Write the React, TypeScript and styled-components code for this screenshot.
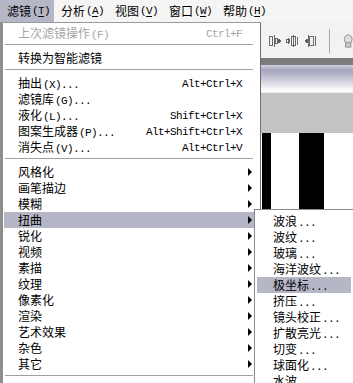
import styled, { createGlobalStyle } from 'styled-components'

const GlobalStyle = createGlobalStyle`
  html, body { margin: 0; padding: 0; }
  body {
    background: #f0f0f0;
    font-family: "Noto Sans CJK SC", "Noto Sans", sans-serif;
    font-size: 12px;
    color: #000;
  }
`

type Entry =
  | { kind: 'sep' }
  | {
      kind: 'item'
      label: string
      latin?: string
      shortcut?: string
      sub?: boolean
      disabled?: boolean
      active?: boolean
    }

const menuTitles = [
  { label: '滤镜', key: 'T', active: true },
  { label: '分析', key: 'A' },
  { label: '视图', key: 'V' },
  { label: '窗口', key: 'W' },
  { label: '帮助', key: 'H' },
]

const filterMenu: Entry[] = [
  { kind: 'item', label: '上次滤镜操作', latin: '(F)', shortcut: 'Ctrl+F', disabled: true },
  { kind: 'sep' },
  { kind: 'item', label: '转换为智能滤镜' },
  { kind: 'sep' },
  { kind: 'item', label: '抽出', latin: '(X)...', shortcut: 'Alt+Ctrl+X' },
  { kind: 'item', label: '滤镜库', latin: '(G)...' },
  { kind: 'item', label: '液化', latin: '(L)...', shortcut: 'Shift+Ctrl+X' },
  { kind: 'item', label: '图案生成器', latin: '(P)...', shortcut: 'Alt+Shift+Ctrl+X' },
  { kind: 'item', label: '消失点', latin: '(V)...', shortcut: 'Alt+Ctrl+V' },
  { kind: 'sep' },
  { kind: 'item', label: '风格化', sub: true },
  { kind: 'item', label: '画笔描边', sub: true },
  { kind: 'item', label: '模糊', sub: true },
  { kind: 'item', label: '扭曲', sub: true, active: true },
  { kind: 'item', label: '锐化', sub: true },
  { kind: 'item', label: '视频', sub: true },
  { kind: 'item', label: '素描', sub: true },
  { kind: 'item', label: '纹理', sub: true },
  { kind: 'item', label: '像素化', sub: true },
  { kind: 'item', label: '渲染', sub: true },
  { kind: 'item', label: '艺术效果', sub: true },
  { kind: 'item', label: '杂色', sub: true },
  { kind: 'item', label: '其它', sub: true },
  { kind: 'sep' },
]

const distortMenu = [
  { label: '波浪' },
  { label: '波纹' },
  { label: '玻璃' },
  { label: '海洋波纹' },
  { label: '极坐标', active: true },
  { label: '挤压' },
  { label: '镜头校正' },
  { label: '扩散亮光' },
  { label: '切变' },
  { label: '球面化' },
  { label: '水波' },
]

// black / white bands of the document behind the menus
const stripes = [
  { w: 262, c: '#ffffff' },
  { w: 9, c: '#000000' },
  { w: 28, c: '#ffffff' },
  { w: 25, c: '#000000' },
  { w: 29, c: '#ffffff' },
]

export default function App() {
  return (
    <>
      <GlobalStyle />
      <Page>
        <MenuBar>
          {menuTitles.map((m) => (
            <MenuTitle key={m.label} $active={!!m.active}>
              {m.label}
              <Latin>
                (<u>{m.key}</u>)
              </Latin>
            </MenuTitle>
          ))}
        </MenuBar>

        <Workspace>
          <OptionsBar>
            <AlignIcon variant={0} />
            <AlignIcon variant={1} />
            <AlignIcon variant={2} />
            <ToolSep />
            <PartialIcon />
          </OptionsBar>
          <DarkBand />
          <TitleBar />
          <GrayBand />
          <Canvas>
            {stripes.map((s, i) => (
              <Stripe key={i} style={{ width: s.w, background: s.c }} />
            ))}
          </Canvas>
        </Workspace>

        <DropMenu>
          {filterMenu.map((e, i) =>
            e.kind === 'sep' ? (
              <Separator key={i} />
            ) : (
              <Item key={i} $active={!!e.active} $disabled={!!e.disabled}>
                <Label>
                  {e.label}
                  {e.latin && <Latin>{e.latin}</Latin>}
                </Label>
                <Shortcut>{e.shortcut}</Shortcut>
                <ArrowCell>{e.sub && <Arrow />}</ArrowCell>
              </Item>
            )
          )}
        </DropMenu>

        <SubMenu>
          {distortMenu.map((s) => (
            <SubItem key={s.label} $active={!!s.active}>
              {s.label}
              <Latin>...</Latin>
            </SubItem>
          ))}
        </SubMenu>
      </Page>
    </>
  )
}

const AlignIcon = ({ variant }: { variant: number }) => (
  <svg width="16" height="14" viewBox="0 0 16 14" shapeRendering="crispEdges">
    {variant === 0 && (
      <g fill="none" stroke="#555">
        <rect x="1.5" y="1.5" width="4" height="11" />
        <line x1="7.5" y1="0" x2="7.5" y2="14" />
        <rect x="8.5" y="4.5" width="3" height="5" />
        <path d="M12 5 L15 7 L12 9 Z" fill="#555" />
      </g>
    )}
    {variant === 1 && (
      <g fill="none" stroke="#555">
        <line x1="2.5" y1="3" x2="2.5" y2="11" />
        <rect x="0.5" y="5.5" width="4" height="3" />
        <rect x="6.5" y="1.5" width="5" height="11" />
        <line x1="9" y1="0" x2="9" y2="14" />
        <line x1="13.5" y1="2" x2="13.5" y2="12" />
      </g>
    )}
    {variant === 2 && (
      <g fill="none" stroke="#555">
        <path d="M4 5 L1 7 L4 9 Z" fill="#555" />
        <line x1="5.5" y1="0" x2="5.5" y2="14" />
        <rect x="6.5" y="1.5" width="4" height="11" />
        <line x1="13.5" y1="1" x2="13.5" y2="13" />
      </g>
    )}
  </svg>
)

const PartialIcon = () => (
  <svg width="12" height="16" viewBox="0 0 12 16">
    <ellipse cx="6" cy="6" rx="4.5" ry="5" fill="#ddd" stroke="#888" />
    <rect x="3" y="10" width="6" height="5" fill="#ccc" stroke="#888" />
  </svg>
)

const Page = styled.div`
  position: relative;
  width: 353px;
  height: 383px;
  overflow: hidden;
  display: flex;
  flex-direction: column;
  background: #f0f0f0;
`

const MenuBar = styled.div`
  display: flex;
  height: 22px;
  background: #f5f5f5;
  flex-shrink: 0;
`

const MenuTitle = styled.div<{ $active: boolean }>`
  display: flex;
  align-items: center;
  padding: 0 7px;
  width: 40px;
  white-space: nowrap;
  background: ${(p) => (p.$active ? '#b5b6c6' : 'transparent')};
  line-height: 22px;
`

const Latin = styled.span`
  font-family: "Liberation Mono", monospace;
  font-size: 11px;
  letter-spacing: -0.6px;
  margin-left: 1px;

  u {
    text-decoration: underline;
    text-underline-offset: 2px;
  }
`

const Workspace = styled.div`
  flex: 1;
  display: flex;
  flex-direction: column;
  min-height: 0;
`

const OptionsBar = styled.div`
  height: 36px;
  display: flex;
  align-items: center;
  gap: 4px;
  padding: 2px 0 0 268px;
  background: #f2f2f2;
  box-sizing: border-box;
  flex-shrink: 0;
`

const ToolSep = styled.div`
  width: 1px;
  height: 24px;
  margin: 0 9px 0 7px;
  background: #a8a8a8;
`

const DarkBand = styled.div`
  height: 7px;
  background: #7c7c7c;
  flex-shrink: 0;
`

const TitleBar = styled.div`
  height: 28px;
  background: linear-gradient(
    to bottom,
    #d2d2e0 0%,
    #a6a6be 18%,
    #bcbccd 40%,
    #e2e2ea 70%,
    #ffffff 92%,
    #e6e6e6 100%
  );
  flex-shrink: 0;
`

const GrayBand = styled.div`
  height: 40px;
  background: #c3c3c3;
  flex-shrink: 0;
`

const Canvas = styled.div`
  flex: 1;
  display: flex;
`

const Stripe = styled.div`
  height: 100%;
  flex-shrink: 0;
`

const DropMenu = styled.div`
  position: absolute;
  left: 0;
  top: 22px;
  width: 252px;
  height: 380px;
  padding: 2px 4px 0 1px;
  background: #fff;
  border-left: 3px solid #8e8e8e;
  border-right: 1px solid #6e6e6e;
  border-top: 1px solid #9a9a9a;
`

const Item = styled.div<{ $active: boolean; $disabled: boolean }>`
  display: grid;
  grid-template-columns: 1fr auto 14px;
  align-items: center;
  height: 16px;
  padding-left: 14px;
  white-space: nowrap;
  background: ${(p) => (p.$active ? '#b5b6c6' : 'transparent')};
  color: ${(p) => (p.$disabled ? '#a6a6a6' : '#000')};
`

const Label = styled.span`
  line-height: 16px;
`

const Shortcut = styled.span`
  font-family: "Liberation Mono", monospace;
  font-size: 11px;
  letter-spacing: -0.6px;
  line-height: 16px;
`

const ArrowCell = styled.span`
  display: flex;
  justify-content: center;
`

const Arrow = styled.span`
  width: 0;
  height: 0;
  border-left: 4px solid #000;
  border-top: 4px solid transparent;
  border-bottom: 4px solid transparent;
  margin-left: 1px;
`

const Separator = styled.div`
  height: 9px;
  display: flex;
  align-items: flex-start;
  padding: 0 3px 0 1px;

  &::before {
    content: '';
    flex: 1;
    margin-top: 3px;
    height: 1px;
    background: #a0a0a0;
  }
`

const SubMenu = styled.div`
  position: absolute;
  left: 254px;
  top: 209px;
  width: 94px;
  padding: 3px 2px;
  background: #fff;
  border: 1px solid #8a8a8a;
`

const SubItem = styled.div<{ $active: boolean }>`
  height: 16px;
  line-height: 16px;
  padding-left: 16px;
  white-space: nowrap;
  background: ${(p) => (p.$active ? '#b5b6c6' : 'transparent')};
`
